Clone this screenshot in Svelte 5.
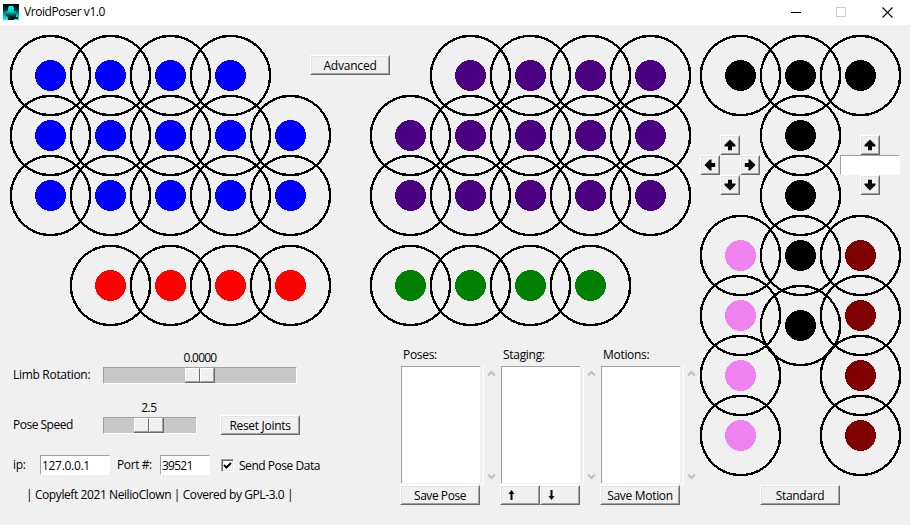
<script>
  const row = (color, y, from, to) => {
    const out = [];
    for (let x = from; x <= to; x += 60) out.push({ color, x, y });
    return out;
  };
  const column = (color, x, ys) => ys.map((y) => ({ color, x, y }));

  const joints = [
    ...row('#0000ff', 50, 50, 230),
    ...row('#0000ff', 110, 50, 290),
    ...row('#0000ff', 170, 50, 290),
    ...row('#4b0082', 50, 470, 650),
    ...row('#4b0082', 110, 410, 650),
    ...row('#4b0082', 170, 410, 650),
    ...row('#ff0000', 260, 110, 290),
    ...row('#008000', 260, 410, 590),
    ...row('#000000', 50, 740, 860),
    ...column('#000000', 800, [110, 170, 230, 300]),
    ...column('#ee82ee', 740, [230, 290, 350, 410]),
    ...column('#800000', 860, [230, 290, 350, 410])
  ];

  let sendPose = $state(true);
  let ip = $state('127.0.0.1');
  let port = $state('39521');
  let offset = $state('');
</script>

{#snippet arrow(angle)}
  <svg class="arrow" width="12" height="12" viewBox="0 0 12 12">
    <path d="M6 .5L11.5 6V7.5H8V11.2H4V7.5H.5V6Z" transform="rotate({angle} 6 6)" />
  </svg>
{/snippet}

{#snippet list(title)}
  <div class="heading">{title}</div>
  <div class="listrow">
    <div class="listbox"><div class="items"></div></div>
    <div class="scroll">
      <svg width="9" height="7" viewBox="0 0 9 7"><path d="M1 5.5L4.5 2L8 5.5" /></svg>
      <svg width="9" height="7" viewBox="0 0 9 7"><path d="M1 1.5L4.5 5L8 1.5" /></svg>
    </div>
  </div>
{/snippet}

<div class="window">
  <header>
    <svg class="logo" width="16" height="16" viewBox="0 0 16 16">
      <defs>
        <linearGradient id="back" x1="0" y1="0" x2="0" y2="1">
          <stop offset="0" stop-color="#000" /><stop offset=".3" stop-color="#022" />
          <stop offset=".65" stop-color="#0aa" /><stop offset="1" stop-color="#0ff" />
        </linearGradient>
        <linearGradient id="figure" x1="0" y1="0" x2="0" y2="1">
          <stop offset="0" stop-color="#0ff" /><stop offset=".4" stop-color="#0cc" />
          <stop offset=".7" stop-color="#033" /><stop offset="1" stop-color="#000" />
        </linearGradient>
      </defs>
      <rect width="16" height="16" fill="url(#back)" />
      <path fill="url(#figure)" d="M6 2H10L11 4V7L13 8V13H15V15H11V16H5V13L3 12L2 9L4 7H5V4Z" />
    </svg>
    <span class="title">VroidPoser v1.0</span>
    <div class="caption">
      <svg width="11" height="11"><path d="M0 5.5H10" stroke="#000" /></svg>
      <svg width="11" height="11"><rect x=".5" y=".5" width="9" height="9" stroke="#ccc" /></svg>
      <svg class="close" width="11" height="11"><path d="M.5 .5L10.5 10.5M10.5 .5L.5 10.5" stroke="#000" stroke-width="1.1" /></svg>
    </div>
  </header>

  <main>
    <svg class="joints" width="910" height="500" shape-rendering="crispEdges">
      {#each joints as j}
        <circle cx={j.x + 0.5} cy={j.y + 0.5} r="39.6" fill="none" stroke="#000" stroke-width="2.3" />
        <circle cx={j.x + 0.5} cy={j.y + 0.5} r="15.5" fill={j.color} />
      {/each}
    </svg>

    <div class="upper">
      <button class="btn advanced"><span>Advanced</span></button>
      <div class="dpad">
        <button class="btn n">{@render arrow(0)}</button>
        <button class="btn w">{@render arrow(-90)}</button>
        <button class="btn e">{@render arrow(90)}</button>
        <button class="btn s">{@render arrow(180)}</button>
      </div>
      <div class="lift">
        <button class="btn">{@render arrow(0)}</button>
        <input bind:value={offset} />
        <button class="btn">{@render arrow(180)}</button>
      </div>
    </div>

    <div class="lower">
      <section class="settings">
        <div class="line limb">
          <span class="label l1">Limb Rotation:</span>
          <div class="scale wide">
            <span class="value v1">0.0000</span>
            <div class="trough"><div class="thumb"><i></i><i></i></div></div>
          </div>
        </div>
        <div class="line speed">
          <span class="label l2">Pose Speed</span>
          <div class="scale">
            <span class="value v2">2.5</span>
            <div class="trough"><div class="thumb"><i></i><i></i></div></div>
          </div>
          <button class="btn reset"><span>Reset Joints</span></button>
        </div>
        <div class="line net">
          <span class="label l3">ip:</span>
          <input class="ip" bind:value={ip} />
          <span class="label l4">Port #:</span>
          <input class="port" bind:value={port} />
          <button class="check" aria-label="Send Pose Data" onclick={() => (sendPose = !sendPose)}>
            {#if sendPose}
              <svg width="9" height="9" viewBox="0 0 9 9"><path d="M1 4L3.5 6.5L8 2" /></svg>
            {/if}
          </button>
          <span class="label l5">Send Pose Data</span>
        </div>
        <div class="copy"><span>| Copyleft 2021 NeilioClown | Covered by GPL-3.0 |</span></div>
      </section>

      <section class="list">
        {@render list('Poses:')}
        <button class="btn pose"><span>Save Pose</span></button>
      </section>
      <section class="list">
        {@render list('Staging:')}
        <div class="pair">
          <button class="btn" aria-label="Up"><svg width="7" height="11" viewBox="0 0 7 11"><path d="M3.5 0L6.5 4H4.5V10H2.5V4H.5Z" /></svg></button>
          <button class="btn" aria-label="Down"><svg width="7" height="11" viewBox="0 0 7 11"><path d="M3.5 10L6.5 6H4.5V0H2.5V6H.5Z" /></svg></button>
        </div>
      </section>
      <section class="list">
        {@render list('Motions:')}
        <button class="btn"><span>Save Motion</span></button>
      </section>
      <button class="btn standard"><span>Standard</span></button>
    </div>
  </main>
</div>

<style>
  :global(body) { margin: 0; overflow: hidden; }
  .window {
    width: 910px; height: 525px; background: #f0f0f0; color: #000;
    font: 12px/16px 'Open Sans', 'Noto Sans', sans-serif; letter-spacing: -0.3px; white-space: nowrap;
    display: flex; flex-direction: column; overflow: hidden;
  }
  header { height: 25px; background: #fff; display: flex; align-items: center; flex: none; }
  .logo { margin: -1px 5px 0 3px; }
  .title { margin-top: -1px; letter-spacing: -0.43px; }
  .caption { margin-left: auto; display: flex; gap: 34px; padding-right: 17px; margin-top: -1px; }
  .caption svg { fill: none; display: block; }
  .caption svg:not(.close) { position: relative; left: -1px; }
  main { position: relative; height: 500px; display: flex; flex-direction: column; }
  .joints { position: absolute; left: 0; top: 0; }
  .upper { position: relative; height: 320px; display: flex; align-items: flex-start; }
  .lower { position: relative; height: 180px; display: flex; align-items: flex-start; }

  button, input { font: inherit; letter-spacing: inherit; color: inherit; box-sizing: border-box; border-radius: 0; margin: 0; outline: none; }
  .btn {
    width: 80px; height: 20px; padding: 0; display: flex; align-items: center; justify-content: center;
    background: #f0f0f0; border: 1px solid; border-color: #fff #696969 #696969 #fff;
    box-shadow: inset 1px 1px #e3e3e3, inset -1px -1px #a0a0a0; flex: none;
  }
  .btn span { position: relative; top: 1px; }
  .btn svg { display: block; }
  input { height: 20px; padding: 0 1px; background: #fff; border: 1px solid; border-color: #a0a0a0 #fff #fff #a0a0a0; display: block; }
  .advanced { margin: 30px 0 0 310px; letter-spacing: -0.2px; }
  .pose { letter-spacing: -0.45px; }
  .dpad { margin: 110px 0 0 310px; display: grid; grid-template: repeat(3, 20px) / repeat(3, 20px); }
  .dpad .btn, .lift .btn { width: 20px; }
  .arrow { flex: none; }
  .n { grid-area: 1 / 2; } .w { grid-area: 2 / 1; } .e { grid-area: 2 / 3; } .s { grid-area: 3 / 2; }
  .lift { margin: 110px 0 0 80px; width: 60px; display: flex; flex-direction: column; align-items: center; }
  .lift input { width: 60px; }

  .settings { width: 400px; display: flex; flex-direction: column; }
  .line { display: flex; align-items: flex-start; padding-left: 13px; box-sizing: border-box; }
  .limb, .speed { height: 50px; }
  .limb .label, .speed .label { width: 90px; margin-top: 22px; }
  .speed .l2 { letter-spacing: -0.5px; }
  .scale { width: 94px; display: flex; flex-direction: column; align-items: center; padding-top: 5px; }
  .scale.wide { width: 194px; }
  .value { height: 17px; letter-spacing: -0.75px; }
  .v2 { letter-spacing: -0.4px; padding-right: 2px; }
  .trough {
    width: 100%; height: 17px; box-sizing: border-box; background: #c8c8c8; border: 1px solid;
    border-color: #a0a0a0 #fff #fff #a0a0a0; display: flex; justify-content: center;
  }
  .speed .trough { padding-right: 2px; }
  .thumb { width: 30px; height: 15px; display: flex; box-sizing: border-box; border-right: 1px solid #696969; border-bottom: 1px solid #696969; }
  .thumb i { flex: 1; background: #f0f0f0; border: 1px solid; border-color: #fff #a0a0a0 #a0a0a0 #fff; }
  .thumb i:first-child { border-right-color: #696969; }
  .reset { margin: 20px 0 0 23px; }
  .net { height: 35px; padding-top: 10px; }
  .net .label { margin-top: 2px; }
  .l3 { width: 27px; }
  .ip { width: 70px; }
  .l4 { margin-left: 7px; width: 43px; }
  .net .l4 { letter-spacing: -0.4px; }
  .port { width: 50px; letter-spacing: -0.75px; }
  .check {
    width: 13px; height: 13px; margin: 4px 5px 0 11px; padding: 0; background: #fff; border: 1px solid;
    border-color: #a0a0a0 #fff #fff #a0a0a0; box-shadow: inset 1px 1px #696969, inset -1px -1px #e3e3e3;
    display: flex; align-items: center; justify-content: center;
  }
  .check path { fill: none; stroke: #000; stroke-width: 2; }
  .net .l5 { margin-top: 3px; letter-spacing: -0.46px; }
  .copy { padding: 7px 0 0 26px; letter-spacing: -0.41px; }

  .list { width: 100px; display: flex; flex-direction: column; }
  .heading { height: 18px; padding: 2px 0 0 3px; }
  .listrow { height: 120px; display: flex; }
  .listbox { width: 84px; box-sizing: border-box; padding: 1px 0 0 1px; border-right: 1px solid #fff; border-bottom: 1px solid #fff; }
  .items { width: 79px; height: 117px; box-sizing: border-box; background: #fff; border-left: 1px solid #a0a0a0; border-top: 1px solid #a0a0a0; }
  .scroll { display: flex; flex-direction: column; justify-content: space-between; padding: 5px 0 5px 3px; box-sizing: border-box; }
  .scroll path { fill: none; stroke: #bfbfbf; stroke-width: 2; }
  .pair { display: flex; }
  .pair .btn { width: 40px; justify-content: flex-start; padding-left: 7px; }
  .standard { margin: 140px 0 0 60px; }
</style>
